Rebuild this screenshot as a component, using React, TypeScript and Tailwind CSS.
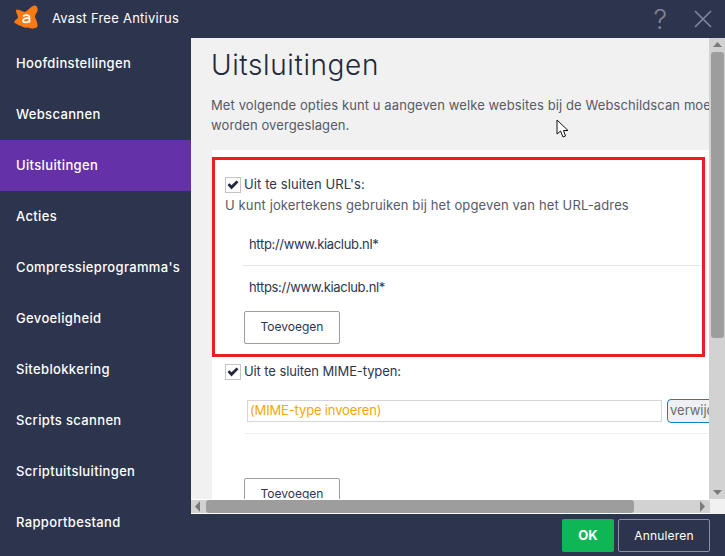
const menu = [
  "Hoofdinstellingen",
  "Webscannen",
  "Uitsluitingen",
  "Acties",
  "Compressieprogramma's",
  "Gevoeligheid",
  "Siteblokkering",
  "Scripts scannen",
  "Scriptuitsluitingen",
  "Rapportbestand",
];

function Logo() {
  return (
    <svg width="24" height="24" viewBox="0 0 24 24" className="ml-[14px] mt-[-4px]">
      <path
        d="M3 4.5 C6 5 8.5 6.5 11 7 C14 5.5 17 1.5 20 0.5 C23 0 24 3 23.5 6 C22.5 8 21 10 21 12 C22 15 24 18 23.5 21.5 C21 24 17 24 14 22.5 C11 23 8 22 6.5 20.5 C5 21.5 3 18.5 0.5 18 C-0.5 16.5 2 14.5 4 13 C4 10.5 2.5 8.5 2 6.5 C2 5.5 2.5 4.5 3 4.5 Z"
        fill="#f97a12"
      />
      <path
        d="M9 11.5 C10 9.5 15 9.5 15.5 12 L15.5 17.5 M15.5 13.5 C13 12.5 9 13.5 9 15.5 C9 18 13 18 15.5 16"
        fill="none"
        stroke="#fff"
        strokeWidth="1.7"
      />
    </svg>
  );
}

function Checkbox() {
  return (
    <span className="flex h-[16px] w-[16px] shrink-0 items-center justify-center border border-[#c4c4c4] bg-white">
      <svg width="12" height="10" viewBox="0 0 12 10">
        <path d="M0.5 5 L2.5 3.2 L4.5 5.2 L9.5 0.5 L11.5 2.3 L4.5 9.5 Z" fill="#23283a" />
      </svg>
    </span>
  );
}

function OutlineButton() {
  return (
    <button className="h-[33px] w-[96px] rounded-[2px] border border-[#9a9ca6] bg-white text-[12px] text-[#2d3550]">
      Toevoegen
    </button>
  );
}

function Arrow({ dir }: { dir: "up" | "down" | "left" | "right" }) {
  const points = {
    up: "1,7 10,7 5.5,2",
    down: "1,3 10,3 5.5,8",
    left: "7,0 7,11 2,5.5",
    right: "3,0 3,11 8,5.5",
  };
  return (
    <svg width="11" height="11" viewBox="0 0 11 11">
      <polygon points={points[dir]} fill="#7b7b7b" />
    </svg>
  );
}

export default function App() {
  return (
    <div
      className="relative flex h-[556px] w-[725px] flex-col overflow-hidden bg-[#2d354e] text-[#2d3550]"
      style={{ fontFamily: '"Inter", "Open Sans", sans-serif' }}
    >
      {/* Title bar */}
      <header className="flex h-[38px] shrink-0 items-center">
        <Logo />
        <span className="ml-[14px] text-[13px] tracking-[0.25px] text-white">Avast Free Antivirus</span>
        <span className="ml-auto mr-[27px] text-[27px] font-light leading-none text-[#80859a]">?</span>
        <svg width="18" height="18" viewBox="0 0 18 18" className="mr-[13px]">
          <path d="M1 1 L17 17 M17 1 L1 17" stroke="#80859a" strokeWidth="1.7" fill="none" />
        </svg>
      </header>

      <div className="flex min-h-0 flex-1">
        {/* Sidebar */}
        <nav className="w-[191px] shrink-0">
          {menu.map((item) => (
            <div
              key={item}
              className={`flex h-[51px] items-center pl-[16px] text-[13px] font-medium tracking-[0.35px] text-white ${
                item === "Uitsluitingen" ? "bg-[#6531a8]" : ""
              }`}
            >
              {item}
            </div>
          ))}
        </nav>

        <div className="flex min-w-0 flex-1 flex-col">
          <div className="flex min-h-0 flex-1">
            {/* Scrolled content */}
            <main className="min-w-0 flex-1 overflow-hidden bg-[#f1f1f1]">
              <div className="w-[600px] pl-[20px]">
                <h1 className="pt-[9px] text-[28px] font-light leading-[36px] tracking-[0.6px] text-[#23283a]">
                  Uitsluitingen
                </h1>
                <p className="mt-[12px] whitespace-nowrap text-[13px] leading-[20px] tracking-[0.1px] text-[#565a68]">
                  Met volgende opties kunt u aangeven welke websites bij de Webschildscan moeten
                  <br />
                  worden overgeslagen.
                </p>
              </div>

              <section className="ml-[21px] mt-[15px] h-[400px] bg-white pt-[7px]">
                <div className="h-[200px] w-[493px] border-[3px] border-[#ed1c24] pl-[10px] pt-[15px]">
                  <label className="flex items-center gap-[3px] text-[13px] tracking-[0.1px]">
                    <Checkbox />
                    Uit te sluiten URL's:
                  </label>
                  <p className="mt-[1px] text-[13px] leading-[18px] tracking-[0.13px] text-[#565a68]">
                    U kunt jokertekens gebruiken bij het opgeven van het URL-adres
                  </p>
                  <div className="ml-[18px] mt-[21px] border-b border-[#e8e8e8] pb-[12px] pl-[6px] text-[13px] leading-[18px] tracking-[-0.32px]">
                    http://www.kiaclub.nl*
                  </div>
                  <div className="ml-[18px] mt-[12px] pl-[6px] text-[13px] leading-[18px] tracking-[-0.32px]">
                    https://www.kiaclub.nl*
                  </div>
                  <div className="ml-[19px] mt-[15px]">
                    <OutlineButton />
                  </div>
                </div>

                <div className="pl-[13px] pt-[5px]">
                  <label className="flex items-center gap-[3px] text-[13px] tracking-[-0.1px]">
                    <Checkbox />
                    Uit te sluiten MIME-typen:
                  </label>
                  <div className="ml-[20px] mt-[17px] flex w-[600px] items-center gap-[5px] border-b border-[#eeeeee] pb-[10px] pl-[2px]">
                    <div className="flex h-[22px] w-[415px] items-center border border-[#d6d6d6] pl-[2px] text-[13px] tracking-[-0.15px] text-[#f5a800]">
                      (MIME-type invoeren)
                    </div>
                    <button className="h-[24px] w-[70px] rounded-[4px] border border-[#1482c0] bg-[#eef0f3] pl-[2px] text-left text-[13px] text-[#6b6b6b]">
                      verwijderen
                    </button>
                  </div>
                  <div className="ml-[19px] mt-[44px]">
                    <OutlineButton />
                  </div>
                </div>
              </section>
            </main>

            {/* Vertical scrollbar */}
            <div className="flex w-[16px] shrink-0 flex-col items-center bg-[#d2d2d2]">
              <div className="flex h-[14px] items-center justify-center">
                <Arrow dir="up" />
              </div>
              <div className="h-[286px] w-[13px] rounded-[3px] bg-[#9d9d9d]" />
              <div className="mt-auto flex h-[14px] items-center justify-center">
                <Arrow dir="down" />
              </div>
            </div>
          </div>

          {/* Horizontal scrollbar */}
          <div className="flex h-[15px] shrink-0 bg-white">
            <div className="flex min-w-0 flex-1 items-center border-y border-white bg-[#d2d2d2]">
              <div className="flex w-[15px] shrink-0 justify-center">
                <Arrow dir="left" />
              </div>
              <div className="h-[13px] w-[428px] rounded-[3px] bg-[#9d9d9d]" />
              <div className="ml-auto flex w-[15px] justify-center">
                <Arrow dir="right" />
              </div>
            </div>
            <div className="w-[15px] bg-[#f1f1f1]" />
          </div>

          {/* Footer buttons */}
          <footer className="flex h-[42px] shrink-0 items-start justify-end gap-[4px] pr-[15px] pt-[5px]">
            <button className="h-[33px] w-[52px] rounded-[2px] bg-[#0fb655] text-[13px] font-bold text-white">
              OK
            </button>
            <button className="h-[33px] w-[92px] rounded-[2px] border border-[#8c8f9f] text-[12px] tracking-[0.2px] text-white">
              Annuleren
            </button>
          </footer>
        </div>
      </div>

      {/* Mouse pointer captured in the screenshot */}
      <svg width="14" height="20" viewBox="0 0 14 20" className="absolute left-[556px] top-[119px]">
        <path d="M1 1 L1 15 L4.5 12 L7 18 L9.5 17 L7.5 11.5 L12 11.5 Z" fill="#fff" stroke="#111" strokeWidth="1" />
      </svg>
    </div>
  );
}
